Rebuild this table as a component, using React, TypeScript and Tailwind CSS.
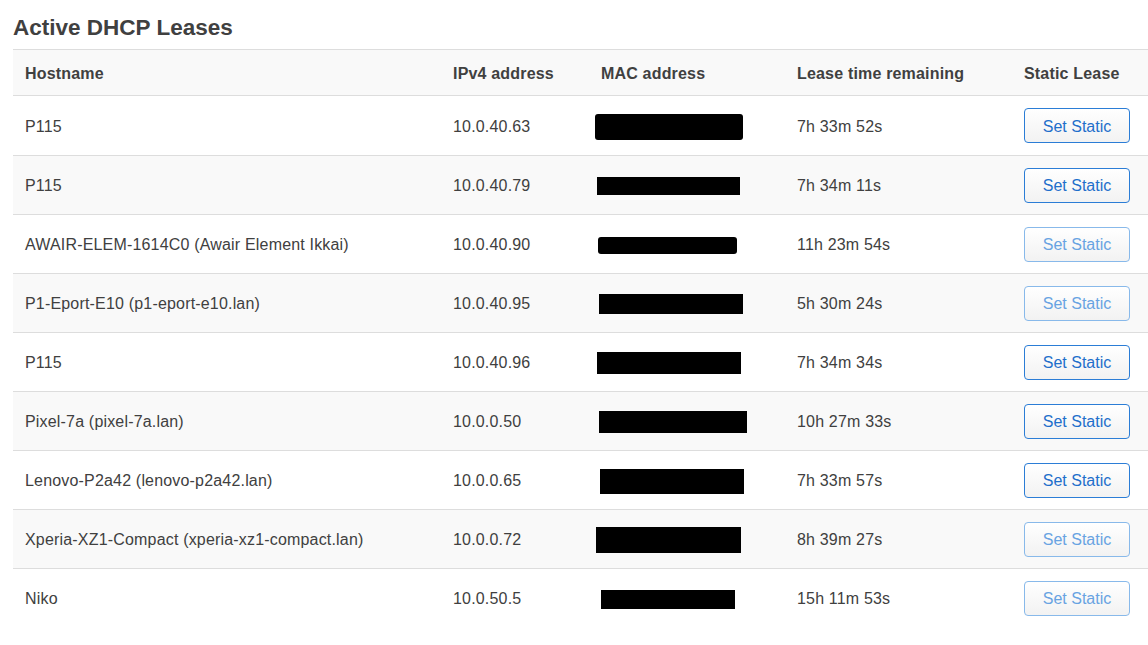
const leases = [
  { host: "P115", ip: "10.0.40.63", lease: "7h 33m 52s", mac: { w: 148, h: 26, ml: 6, blur: true }, enabled: true },
  { host: "P115", ip: "10.0.40.79", lease: "7h 34m 11s", mac: { w: 143, h: 18, ml: 8 }, enabled: true },
  { host: "AWAIR-ELEM-1614C0 (Awair Element Ikkai)", ip: "10.0.40.90", lease: "11h 23m 54s", mac: { w: 139, h: 17, ml: 9, blur: true }, enabled: false },
  { host: "P1-Eport-E10 (p1-eport-e10.lan)", ip: "10.0.40.95", lease: "5h 30m 24s", mac: { w: 144, h: 20, ml: 10 }, enabled: false },
  { host: "P115", ip: "10.0.40.96", lease: "7h 34m 34s", mac: { w: 144, h: 22, ml: 8 }, enabled: true },
  { host: "Pixel-7a (pixel-7a.lan)", ip: "10.0.0.50", lease: "10h 27m 33s", mac: { w: 148, h: 22, ml: 10 }, enabled: true },
  { host: "Lenovo-P2a42 (lenovo-p2a42.lan)", ip: "10.0.0.65", lease: "7h 33m 57s", mac: { w: 144, h: 25, ml: 11 }, enabled: true },
  { host: "Xperia-XZ1-Compact (xperia-xz1-compact.lan)", ip: "10.0.0.72", lease: "8h 39m 27s", mac: { w: 145, h: 26, ml: 7 }, enabled: false },
  { host: "Niko", ip: "10.0.50.5", lease: "15h 11m 53s", mac: { w: 134, h: 19, ml: 12 }, enabled: false },
];

const cols = "grid grid-cols-[428px_148px_196px_227px_1fr]";

export default function App() {
  return (
    <div className="min-h-[645px] bg-white pl-[13px] pt-[14px] text-[#404040]" style={{ fontFamily: '"Liberation Sans", Arial, sans-serif' }}>
      <h2 className="text-[22.5px] font-bold leading-[28px] mb-[7px]">Active DHCP Leases</h2>

      <div className="w-[1135px] tracking-[0.18px]">
        {/* Header */}
        <div className={`${cols} h-[47px] items-center border-y border-[#ddd] bg-[#f9f9f9] text-[16px] font-bold`}>
          <div className="px-3 pt-[2px]">Hostname</div>
          <div className="px-3 pt-[2px]">IPv4 address</div>
          <div className="px-3 pt-[2px]">MAC address</div>
          <div className="px-3 pt-[2px]">Lease time remaining</div>
          <div className="px-3 pt-[2px]">Static Lease</div>
        </div>

        {/* Rows */}
        {leases.map((l, i) => (
          <div
            key={i}
            className={`${cols} h-[59px] items-center text-[16px] ${i > 0 ? "border-t border-[#ddd]" : ""} ${i % 2 === 1 ? "bg-[#f9f9f9]" : "bg-white"}`}
          >
            <div className="px-3 pt-[2px]">{l.host}</div>
            <div className="px-3 pt-[2px]">{l.ip}</div>
            <div className="flex items-center pt-[2px]">
              <div
                className={`bg-black ${l.mac.blur ? "rounded-[3px] blur-[0.6px]" : ""}`}
                style={{ width: l.mac.w, height: l.mac.h, marginLeft: l.mac.ml }}
              />
            </div>
            <div className="px-3 pt-[2px]">{l.lease}</div>
            <div className="px-3">
              <button
                className={`h-[35px] w-[106px] rounded-[4px] border bg-gradient-to-b from-white to-[#f2f2f2] pt-[2px] text-[16px] tracking-normal ${
                  l.enabled ? "border-[#2b7dd6] text-[#1f6fcb]" : "border-[#88b9ea] text-[#68a3e2]"
                }`}
              >
                Set Static
              </button>
            </div>
          </div>
        ))}
      </div>
    </div>
  );
}
